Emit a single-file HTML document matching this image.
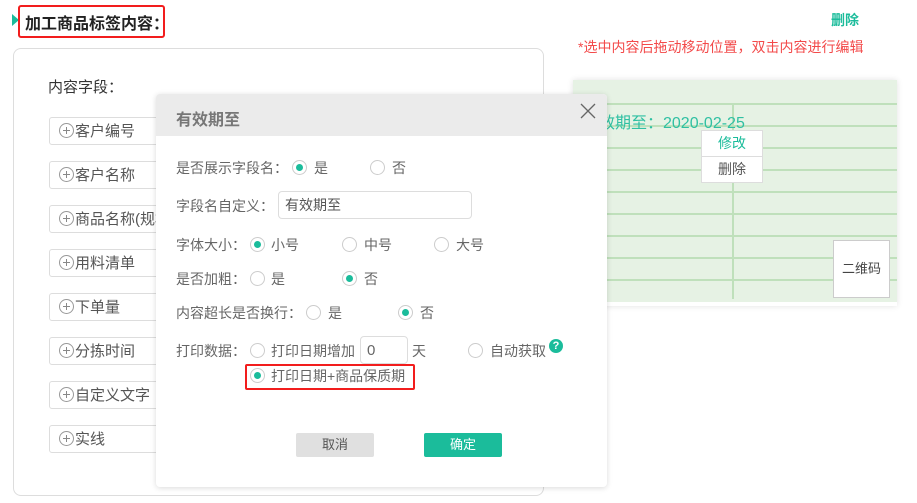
<!DOCTYPE html>
<html><head><meta charset="utf-8"><style>
*{margin:0;padding:0;box-sizing:border-box}
body{width:917px;height:503px;background:#fff;position:relative;overflow:hidden;font-family:"Liberation Sans","Noto Sans CJK SC",sans-serif;font-size:14px;color:#555}
.a{position:absolute;white-space:nowrap}
.radio{position:absolute;width:15px;height:15px;border:1px solid #ccc;border-radius:50%;background:#fff}
.radio.on::after{content:"";position:absolute;left:3px;top:3px;width:7px;height:7px;border-radius:50%;background:#1bbc9b}
.item{position:absolute;left:49px;width:140px;height:28px;border:1px solid #ddd;border-radius:3px;background:#fff;font-size:15px;color:#555;line-height:28px;padding-left:9px}
.item i{display:inline-block;width:15px;height:15px;border:1px solid #999;border-radius:50%;position:relative;vertical-align:-2px;margin-right:1px}
.item i::before{content:"";position:absolute;left:3px;top:6px;width:7px;height:1px;background:#888}
.item i::after{content:"";position:absolute;left:6px;top:3px;width:1px;height:7px;background:#888}
.lbl{color:#666;font-size:14px}
.hl{position:absolute;left:0;right:0;height:2px;background:#bfe0bb}
</style></head><body>
<div class="a" style="left:12px;top:14px;width:0;height:0;border-left:7px solid #1bbc9b;border-top:6px solid transparent;border-bottom:6px solid transparent"></div>
<div class="a" style="left:18px;top:5px;width:147px;height:33px;border:2px solid #f21d1d;border-radius:3px"></div>
<div class="a" style="left:25px;top:10px;font-size:16px;font-weight:bold;color:#222">加工商品标签内容：</div>

<div class="a" style="left:13px;top:48px;width:531px;height:448px;border:1px solid #ddd;border-radius:8px"></div>
<div class="a" style="left:48px;top:76px;font-size:15px;color:#333">内容字段：</div>
<div class="item" style="top:117px"><i></i>客户编号</div>
<div class="item" style="top:161px"><i></i>客户名称</div>
<div class="item" style="top:205px"><i></i>商品名称(规格)</div>
<div class="item" style="top:249px"><i></i>用料清单</div>
<div class="item" style="top:293px"><i></i>下单量</div>
<div class="item" style="top:337px"><i></i>分拣时间</div>
<div class="item" style="top:381px"><i></i>自定义文字</div>
<div class="item" style="top:425px"><i></i>实线</div>

<div class="a" style="left:831px;top:10px;color:#1bbc9b;font-size:14px;font-weight:bold">删除</div>
<div class="a" style="left:578px;top:37px;color:#f34a4a;font-size:14px">*选中内容后拖动移动位置，双击内容进行编辑</div>

<div class="a" style="left:573px;top:80px;width:324px;height:226px;background:#fff;box-shadow:0 0 6px rgba(0,0,0,.12)">
 <div class="a" style="left:0;top:0;width:324px;height:222px;background:#e6f2e4;overflow:hidden">
  <div class="hl" style="top:23px"></div><div class="hl" style="top:45px"></div><div class="hl" style="top:67px"></div><div class="hl" style="top:89px"></div><div class="hl" style="top:111px"></div><div class="hl" style="top:133px"></div><div class="hl" style="top:155px"></div><div class="hl" style="top:177px"></div><div class="hl" style="top:199px"></div>
  <div class="a" style="left:159px;top:23px;width:2px;height:196px;background:#bfe0bb"></div>
  <div class="a" style="left:10px;top:29px;font-size:16px;color:#2fc0a2">有效期至：2020-02-25</div>
  <div class="a" style="left:128px;top:50px;width:62px;height:53px;background:#fff;border:1px solid #ddd">
   <div style="height:26px;line-height:25px;text-align:center;color:#1bbc9b;border-bottom:1px solid #ddd">修改</div>
   <div style="height:25px;line-height:25px;text-align:center;color:#555">删除</div>
  </div>
  <div class="a" style="left:260px;top:160px;width:57px;height:58px;background:#fff;border:1px solid #ccc;text-align:center;line-height:56px;font-size:13px;color:#444">二维码</div>
 </div>
</div>

<div class="a" style="left:156px;top:94px;width:451px;height:393px;background:#fff;border-radius:4px;box-shadow:0 1px 6px rgba(0,0,0,.15)">
 <div class="a" style="left:0;top:0;width:451px;height:42px;background:#ebebeb;border-radius:4px 4px 0 0"></div>
 <div class="a" style="left:20px;top:12px;font-size:16px;font-weight:bold;color:#777">有效期至</div>
 <svg class="a" style="left:424px;top:9px" width="16" height="16" viewBox="0 0 16 16"><path d="M1 1L15 15M15 1L1 15" stroke="#666" stroke-width="1.3"/></svg>
</div>
<div class="a lbl" style="left:176px;top:158px">是否展示字段名：</div>
<div class="radio on" style="left:292px;top:160px"></div><div class="a lbl" style="left:314px;top:158px">是</div>
<div class="radio" style="left:370px;top:160px"></div><div class="a lbl" style="left:392px;top:158px">否</div>

<div class="a lbl" style="left:176px;top:196px">字段名自定义：</div>
<div class="a" style="left:278px;top:191px;width:194px;height:28px;border:1px solid #ddd;border-radius:4px;padding-left:6px;line-height:26px;color:#555">有效期至</div>

<div class="a lbl" style="left:176px;top:235px">字体大小：</div>
<div class="radio on" style="left:250px;top:237px"></div><div class="a lbl" style="left:271px;top:235px">小号</div>
<div class="radio" style="left:342px;top:237px"></div><div class="a lbl" style="left:364px;top:235px">中号</div>
<div class="radio" style="left:434px;top:237px"></div><div class="a lbl" style="left:456px;top:235px">大号</div>

<div class="a lbl" style="left:176px;top:269px">是否加粗：</div>
<div class="radio" style="left:250px;top:271px"></div><div class="a lbl" style="left:271px;top:269px">是</div>
<div class="radio on" style="left:342px;top:271px"></div><div class="a lbl" style="left:364px;top:269px">否</div>

<div class="a lbl" style="left:176px;top:303px">内容超长是否换行：</div>
<div class="radio" style="left:306px;top:305px"></div><div class="a lbl" style="left:328px;top:303px">是</div>
<div class="radio on" style="left:398px;top:305px"></div><div class="a lbl" style="left:420px;top:303px">否</div>

<div class="a lbl" style="left:176px;top:341px">打印数据：</div>
<div class="radio" style="left:250px;top:343px"></div><div class="a lbl" style="left:271px;top:341px">打印日期增加</div>
<div class="a" style="left:360px;top:336px;width:48px;height:28px;border:1px solid #ddd;border-radius:4px;padding-left:6px;line-height:28px;font-size:15px;color:#666">0</div>
<div class="a lbl" style="left:412px;top:341px">天</div>
<div class="radio" style="left:468px;top:343px"></div><div class="a lbl" style="left:490px;top:341px">自动获取</div>
<div class="a" style="left:549px;top:339px;width:14px;height:14px;border-radius:50%;background:#1bbc9b;color:#fff;font-size:11px;font-weight:bold;text-align:center;line-height:14px">?</div>
<div class="a" style="left:245px;top:364px;width:170px;height:26px;border:2px solid #f21d1d;border-radius:2px"></div>
<div class="radio on" style="left:250px;top:368px"></div><div class="a lbl" style="left:271px;top:366px">打印日期+商品保质期</div>

<div class="a" style="left:296px;top:433px;width:78px;height:24px;background:#e0e0e0;border-radius:2px;text-align:center;line-height:24px;font-size:13px;color:#555">取消</div>
<div class="a" style="left:424px;top:433px;width:78px;height:24px;background:#1bbc9b;border-radius:2px;text-align:center;line-height:24px;font-size:13px;color:#fff">确定</div>
</body></html>
